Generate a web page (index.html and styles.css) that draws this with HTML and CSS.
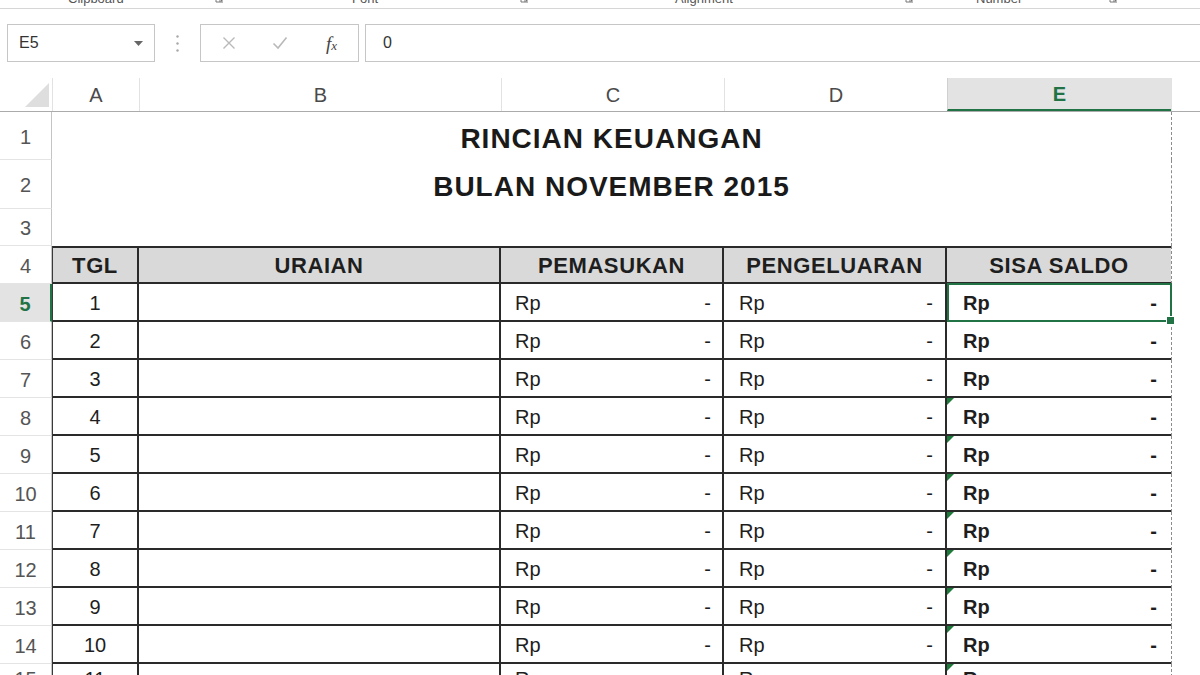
FILE: index.html
```html
<!DOCTYPE html>
<html lang="id">
<head>
<meta charset="utf-8">
<title>Rincian Keuangan</title>
<link rel="stylesheet" href="styles.css">
</head>
<body>
<div class="ribbon">
  <span class="rg w68"></span>
  <span class="rg w147">Clipboard</span>
  <span class="rg w137"><svg class="launch" width="9" height="9" viewBox="0 0 9 9"><path d="M1 1v7h7" fill="none" stroke="#777"/><path d="M3 3l4 4M4 7h3V4" fill="none" stroke="#777"/></svg></span>
  <span class="rg w168">Font</span>
  <span class="rg w155"><svg class="launch" width="9" height="9" viewBox="0 0 9 9"><path d="M1 1v7h7" fill="none" stroke="#777"/><path d="M3 3l4 4M4 7h3V4" fill="none" stroke="#777"/></svg></span>
  <span class="rg w230">Alignment</span>
  <span class="rg w71"><svg class="launch" width="9" height="9" viewBox="0 0 9 9"><path d="M1 1v7h7" fill="none" stroke="#777"/><path d="M3 3l4 4M4 7h3V4" fill="none" stroke="#777"/></svg></span>
  <span class="rg w133">Number</span>
  <span class="rg"><svg class="launch" width="9" height="9" viewBox="0 0 9 9"><path d="M1 1v7h7" fill="none" stroke="#777"/><path d="M3 3l4 4M4 7h3V4" fill="none" stroke="#777"/></svg></span>
</div>

<div class="fbar">
  <div class="namebox"><span>E5</span><svg class="dd" width="9" height="5" viewBox="0 0 9 5"><path d="M0 0h9L4.5 5z" fill="#666"/></svg></div>
  <div class="grip"><svg width="3" height="17" viewBox="0 0 3 17"><circle cx="1.5" cy="1.5" r="1.2" fill="#a8a8a8"/><circle cx="1.5" cy="8.5" r="1.2" fill="#a8a8a8"/><circle cx="1.5" cy="15.5" r="1.2" fill="#a8a8a8"/></svg></div>
  <div class="fxbox">
    <svg class="ico" width="14" height="14" viewBox="0 0 14 14"><path d="M1.5 1.5l11 11M12.5 1.5l-11 11" stroke="#b9b9b9" stroke-width="1.4" fill="none"/></svg>
    <svg class="ico ck" width="16" height="14" viewBox="0 0 16 14"><path d="M1.5 7.5l4.5 4.5L14.5 1.5" stroke="#b9b9b9" stroke-width="1.6" fill="none"/></svg>
    <span class="fx">f<span class="fxx">x</span></span>
  </div>
  <div class="formula">0</div>
</div>

<div class="sheet">
  <div class="r colhdr">
    <div class="corner"><svg width="26" height="25" viewBox="0 0 26 25"><path d="M25 0V24H1z" fill="#dedede"/></svg></div>
    <div class="ch">A</div>
    <div class="ch">B</div>
    <div class="ch">C</div>
    <div class="ch">D</div>
    <div class="ch chsel">E</div>
    <div class="chf"></div>
  </div>

  <div class="r h48">
    <div class="rh">1</div>
    <div class="title t1">RINCIAN KEUANGAN</div>
    <div class="pb"></div>
  </div>
  <div class="r h49">
    <div class="rh">2</div>
    <div class="title t2">BULAN NOVEMBER 2015</div>
    <div class="pb"></div>
  </div>
  <div class="r h37">
    <div class="rh">3</div>
    <div class="title"></div>
    <div class="pb"></div>
  </div>

  <div class="r h38 thead">
    <div class="rh">4</div>
    <div class="c ca">TGL</div>
    <div class="c">URAIAN</div>
    <div class="c">PEMASUKAN</div>
    <div class="c">PENGELUARAN</div>
    <div class="c ce">SISA SALDO</div>
    <div class="pb"></div>
  </div>

  <div class="r h38 tb">
    <div class="rh rhsel">5</div>
    <div class="c ca">1</div><div class="c"></div>
    <div class="c cc"><span>Rp</span><span>-</span></div>
    <div class="c cd"><span>Rp</span><span>-</span></div>
    <div class="c ce active"><span>Rp</span><span>-</span></div>
    <div class="pb"></div>
  </div>
  <div class="r h38 tb">
    <div class="rh">6</div>
    <div class="c ca">2</div><div class="c"></div>
    <div class="c cc"><span>Rp</span><span>-</span></div>
    <div class="c cd"><span>Rp</span><span>-</span></div>
    <div class="c ce"><span>Rp</span><span>-</span></div>
    <div class="pb"></div>
  </div>
  <div class="r h38 tb">
    <div class="rh">7</div>
    <div class="c ca">3</div><div class="c"></div>
    <div class="c cc"><span>Rp</span><span>-</span></div>
    <div class="c cd"><span>Rp</span><span>-</span></div>
    <div class="c ce"><span>Rp</span><span>-</span></div>
    <div class="pb"></div>
  </div>
  <div class="r h38 tb">
    <div class="rh">8</div>
    <div class="c ca">4</div><div class="c"></div>
    <div class="c cc"><span>Rp</span><span>-</span></div>
    <div class="c cd"><span>Rp</span><span>-</span></div>
    <div class="c ce err"><span>Rp</span><span>-</span></div>
    <div class="pb"></div>
  </div>
  <div class="r h38 tb">
    <div class="rh">9</div>
    <div class="c ca">5</div><div class="c"></div>
    <div class="c cc"><span>Rp</span><span>-</span></div>
    <div class="c cd"><span>Rp</span><span>-</span></div>
    <div class="c ce err"><span>Rp</span><span>-</span></div>
    <div class="pb"></div>
  </div>
  <div class="r h38 tb">
    <div class="rh">10</div>
    <div class="c ca">6</div><div class="c"></div>
    <div class="c cc"><span>Rp</span><span>-</span></div>
    <div class="c cd"><span>Rp</span><span>-</span></div>
    <div class="c ce err"><span>Rp</span><span>-</span></div>
    <div class="pb"></div>
  </div>
  <div class="r h38 tb">
    <div class="rh">11</div>
    <div class="c ca">7</div><div class="c"></div>
    <div class="c cc"><span>Rp</span><span>-</span></div>
    <div class="c cd"><span>Rp</span><span>-</span></div>
    <div class="c ce err"><span>Rp</span><span>-</span></div>
    <div class="pb"></div>
  </div>
  <div class="r h38 tb">
    <div class="rh">12</div>
    <div class="c ca">8</div><div class="c"></div>
    <div class="c cc"><span>Rp</span><span>-</span></div>
    <div class="c cd"><span>Rp</span><span>-</span></div>
    <div class="c ce err"><span>Rp</span><span>-</span></div>
    <div class="pb"></div>
  </div>
  <div class="r h38 tb">
    <div class="rh">13</div>
    <div class="c ca">9</div><div class="c"></div>
    <div class="c cc"><span>Rp</span><span>-</span></div>
    <div class="c cd"><span>Rp</span><span>-</span></div>
    <div class="c ce err"><span>Rp</span><span>-</span></div>
    <div class="pb"></div>
  </div>
  <div class="r h38 tb">
    <div class="rh">14</div>
    <div class="c ca">10</div><div class="c"></div>
    <div class="c cc"><span>Rp</span><span>-</span></div>
    <div class="c cd"><span>Rp</span><span>-</span></div>
    <div class="c ce err"><span>Rp</span><span>-</span></div>
    <div class="pb"></div>
  </div>
  <div class="r h38 tb partial">
    <div class="rh">15</div>
    <div class="c ca">11</div><div class="c"></div>
    <div class="c cc"><span>Rp</span><span>-</span></div>
    <div class="c cd"><span>Rp</span><span>-</span></div>
    <div class="c ce err"><span>Rp</span><span>-</span></div>
    <div class="pb"></div>
  </div>
</div>
</body>
</html>
```

FILE: styles.css
```css
* { box-sizing: border-box; margin: 0; padding: 0; }
html, body { width: 1200px; height: 675px; overflow: hidden; background: #fff; }
body { font-family: "Liberation Sans", Arial, sans-serif; color: #1e1e1e; }

/* ribbon group labels (clipped) */
.ribbon { height: 9px; border-bottom: 1px solid #d6d6d6; display: flex; overflow: hidden; }
.rg { display: block; flex: none; font-size: 13px; line-height: 13px; color: #555; margin-top: -8px; white-space: nowrap; }
.w68 { width: 68px; } .w147 { width: 147px; } .w137 { width: 137px; } .w168 { width: 168px; }
.w155 { width: 155px; } .w230 { width: 230px; } .w71 { width: 71px; } .w133 { width: 133px; }
.launch { display: block; margin-top: 2px; }

/* formula bar */
.fbar { display: flex; height: 38px; margin-top: 15px; }
.namebox { margin-left: 7px; width: 148px; border: 1px solid #c6c6c6; display: flex; align-items: center; padding-left: 11px; font-size: 16px; color: #333; }
.namebox .dd { margin-left: auto; margin-right: 11px; }
.grip { width: 45px; display: flex; align-items: center; justify-content: center; }
.fxbox { width: 159px; border: 1px solid #c6c6c6; display: flex; align-items: center; padding-left: 21px; }
.ico { display: block; }
.ck { margin-left: 36px; }
.fx { margin-left: 38px; font-family: "Liberation Serif", "Times New Roman", serif; font-style: italic; font-size: 19px; color: #444; line-height: 1; }
.fxx { font-size: 13px; }
.formula { flex: 1; margin-left: 6px; margin-right: -2px; border: 1px solid #c6c6c6; display: flex; align-items: center; padding-left: 17px; font-size: 16px; color: #333; }

/* sheet */
.sheet { margin-top: 16px; }
.r { display: grid; grid-template-columns: 52px 87px 362px 223px 223px 224px 1fr; }
.h48 { height: 48px; } .h49 { height: 49px; } .h37 { height: 37px; } .h38 { height: 38px; }

.colhdr { height: 34px; border-bottom: 1px solid #ababab; }
.corner { display: flex; align-items: flex-end; justify-content: flex-end; padding: 0 2px 3px 0; }
.ch { display: flex; align-items: center; justify-content: center; font-size: 20px; color: #4a4a4a; border-left: 1px solid #e2e2e2; padding-top: 1px; }
.chsel { background: #e3e3e3; color: #217346; font-weight: bold; border-bottom: 2px solid #217346; border-left-color: #d0d0d0; }
.chf { border-left: 1px solid #e2e2e2; }

.rh { display: flex; align-items: center; justify-content: center; font-size: 20px; color: #555; border-right: 1px solid #c4c4c4; border-bottom: 1px solid #e4e4e4; padding-top: 3px; }
.rhsel { background: #e3e3e3; color: #217346; font-weight: bold; border-right: 2px solid #217346; }

.title { grid-column: span 5; display: flex; align-items: center; justify-content: center; font-weight: bold; font-size: 28px; letter-spacing: 1px; color: #1a1a1a; }
.t1 { padding-top: 6px; }
.t2 { padding-top: 4px; }
.pb { border-left: 1px dashed #8c8c8c; }

.c { display: flex; align-items: center; justify-content: center; border-right: 2px solid #2a2a2a; border-bottom: 2px solid #2a2a2a; font-size: 20px; color: #1e1e1e; padding-top: 2px; position: relative; }
.ca { border-left: 1px solid #3a3a3a; }
.thead .c { background: #d9d9d9; border-top: 2px solid #2a2a2a; font-weight: bold; font-size: 22px; letter-spacing: 0.6px; }
.thead .ce, .c.ce { border-right: none; }
.cc { justify-content: space-between; padding-left: 14px; padding-right: 11px; }
.cd { justify-content: space-between; padding-left: 15px; padding-right: 12px; }
.tb .ce { justify-content: space-between; padding-left: 16px; padding-right: 14px; font-weight: bold; }

/* last, partially visible row: text sits near the top edge */
.partial .c, .partial .rh { align-items: flex-start; padding-top: 4px; }

.active::after { content: ""; position: absolute; left: 0; top: -1px; right: -1px; bottom: -2px; border: 2px solid #217346; z-index: 2; }
.active::before { content: ""; position: absolute; right: -4px; bottom: -5px; width: 7px; height: 7px; background: #217346; border: 1px solid #fff; z-index: 3; }
.err::before { content: ""; position: absolute; left: 0; top: 0; width: 0; height: 0; border-top: 7px solid #1d7a3a; border-right: 7px solid transparent; }
```
